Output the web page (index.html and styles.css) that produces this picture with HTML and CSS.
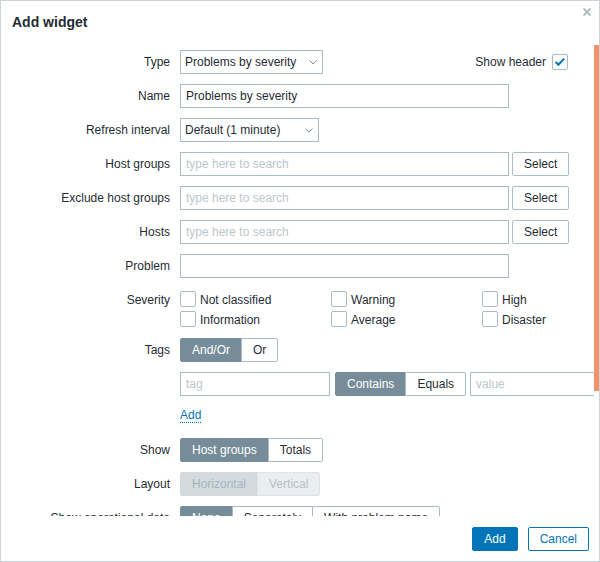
FILE: index.html
```html
<!DOCTYPE html>
<html>
<head>
<meta charset="utf-8">
<link rel="stylesheet" href="styles.css">
</head>
<body>
<div class="dialog">
  <div class="head">
    <h4 class="title">Add widget</h4>
    <span class="close"><svg width="8" height="8" viewBox="0 0 8 8"><path d="M0.5 0.5 L7.5 7.5 M7.5 0.5 L0.5 7.5" stroke="#a9b6bc" stroke-width="1.8" fill="none"/></svg></span>
  </div>
  <div class="body">
    <div class="content">
      <div class="form">
        <div class="lbl">Type</div>
        <div class="field split">
          <div class="select sel-type"><span>Problems by severity</span><svg class="chev" width="8" height="5" viewBox="0 0 8 5"><polyline points="0.5,0.5 4,4 7.5,0.5" fill="none" stroke="#7a8c95" stroke-width="1"/></svg></div>
          <div class="show-header"><span>Show header</span><span class="cb"><svg width="14" height="14" viewBox="0 0 14 14"><path d="M2.6 7 L5.4 9.8 L11.2 3.6" fill="none" stroke="#0275b8" stroke-width="2"/></svg></span></div>
        </div>

        <div class="lbl">Name</div>
        <div class="field"><div class="input w329">Problems by severity</div></div>

        <div class="lbl">Refresh interval</div>
        <div class="field"><div class="select sel-refresh"><span>Default (1 minute)</span><svg class="chev" width="8" height="5" viewBox="0 0 8 5"><polyline points="0.5,0.5 4,4 7.5,0.5" fill="none" stroke="#7a8c95" stroke-width="1"/></svg></div></div>

        <div class="lbl">Host groups</div>
        <div class="field picker"><div class="input w329 ph">type here to search</div><span class="btn">Select</span></div>

        <div class="lbl">Exclude host groups</div>
        <div class="field picker"><div class="input w329 ph">type here to search</div><span class="btn">Select</span></div>

        <div class="lbl">Hosts</div>
        <div class="field picker"><div class="input w329 ph">type here to search</div><span class="btn">Select</span></div>

        <div class="lbl">Problem</div>
        <div class="field"><div class="input w329"></div></div>

        <div class="lbl">Severity</div>
        <div class="field severity">
          <label class="chk"><span class="cb"></span>Not classified</label>
          <label class="chk"><span class="cb"></span>Information</label>
          <label class="chk"><span class="cb"></span>Warning</label>
          <label class="chk"><span class="cb"></span>Average</label>
          <label class="chk"><span class="cb"></span>High</label>
          <label class="chk"><span class="cb"></span>Disaster</label>
        </div>

        <div class="lbl">Tags</div>
        <div class="field tags">
          <div class="seg"><span class="seg-item on">And/Or</span><span class="seg-item">Or</span></div>
          <div class="tag-row">
            <div class="input w150 ph">tag</div>
            <div class="seg"><span class="seg-item on">Contains</span><span class="seg-item">Equals</span></div>
            <div class="input w150 ph">value</div>
          </div>
          <div class="add-row"><span class="link">Add</span></div>
        </div>

        <div class="lbl">Show</div>
        <div class="field"><div class="seg"><span class="seg-item on">Host groups</span><span class="seg-item">Totals</span></div></div>

        <div class="lbl">Layout</div>
        <div class="field"><div class="seg disabled"><span class="seg-item on">Horizontal</span><span class="seg-item">Vertical</span></div></div>

        <div class="lbl">Show operational data</div>
        <div class="field"><div class="seg"><span class="seg-item on">None</span><span class="seg-item">Separately</span><span class="seg-item">With problem name</span></div></div>

        <div class="lbl">Show suppressed problems</div>
        <div class="field"><span class="cb"></span></div>
      </div>
    </div>
    <div class="track"><div class="thumb"></div></div>
  </div>
  <div class="foot">
    <span class="btn btn-primary">Add</span>
    <span class="btn btn-outline">Cancel</span>
  </div>
</div>
</body>
</html>
```

FILE: styles.css
```css
* { box-sizing: border-box; }
html, body { margin: 0; padding: 0; background: #fff; }
body {
  font-family: "Liberation Sans", Arial, sans-serif;
  font-size: 12px;
  color: #1f2c33;
}
.dialog {
  width: 600px;
  height: 562px;
  border: 1px solid #ccd5d9;
  background: #fff;
  display: flex;
  flex-direction: column;
  position: relative;
}
.head {
  flex: none;
  height: 39px;
  padding: 13px 11px 0;
}
.title {
  margin: 0;
  font-size: 14px;
  line-height: 16px;
  font-weight: bold;
  color: #1f2c33;
}
.close {
  position: absolute;
  top: 7px;
  right: 8px;
  width: 8px;
  height: 8px;
  display: block;
}
.close svg { display: block; }

.body {
  flex: none;
  height: 476px;
  display: flex;
}
.content {
  flex: 1;
  overflow: hidden;
  padding: 10px 0 0 9px;
}
.track { flex: none; width: 5px; }
.thumb { margin-top: 5px; height: 346px; background: #f3926a; }

.form {
  display: grid;
  grid-template-columns: 160px 388px;
  column-gap: 10px;
  row-gap: 10px;
  align-items: start;
}
.lbl {
  text-align: right;
  line-height: 24px;
  white-space: nowrap;
}
.field { min-height: 24px; }
.split {
  display: flex;
  justify-content: space-between;
  align-items: center;
}
.select {
  height: 24px;
  border: 1px solid #acbbc2;
  background: #fff;
  padding: 0 5px 0 4px;
  line-height: 22px;
  display: flex;
  justify-content: space-between;
  align-items: center;
  white-space: nowrap;
}
.sel-type { width: 143px; }
.sel-refresh { width: 139px; }
.chev { display: block; margin-top: 1px; }
.show-header {
  display: flex;
  align-items: center;
  gap: 6px;
}
.cb {
  width: 16px;
  height: 16px;
  border: 1px solid #acbbc2;
  border-radius: 2px;
  background: #fff;
  display: inline-flex;
  align-items: center;
  justify-content: center;
  flex: none;
}
.cb svg { display: block; }
.input {
  height: 24px;
  border: 1px solid #acbbc2;
  background: #fff;
  padding: 0 5px;
  line-height: 22px;
  white-space: nowrap;
  overflow: hidden;
  flex: none;
}
.input.ph { color: #bcc6cb; }
.w329 { width: 329px; }
.w150 { width: 150px; }
.picker { display: flex; gap: 3px; }
.btn {
  display: inline-block;
  height: 24px;
  padding: 0 11px;
  border: 1px solid #acbbc2;
  border-radius: 2px;
  background: #fff;
  line-height: 22px;
  color: #1f2c33;
  white-space: nowrap;
  flex: none;
}
.btn-primary { background: #0275b8; border-color: #0275b8; color: #fff; }
.btn-outline { background: #fff; border-color: #0275b8; color: #0275b8; }

.severity {
  display: grid;
  grid-template-columns: repeat(3, 151px);
  grid-template-rows: repeat(2, 20px);
  grid-auto-flow: column;
}
.chk {
  display: flex;
  align-items: flex-start;
  gap: 4px;
  line-height: 24px;
  height: 20px;
  white-space: nowrap;
}
.chk .cb { margin-top: 3px; }

.seg { display: inline-flex; }
.seg-item {
  height: 24px;
  padding: 0 11px;
  border: 1px solid #acbbc2;
  line-height: 22px;
  background: #fff;
  color: #1f2c33;
  white-space: nowrap;
}
.seg-item + .seg-item { margin-left: -1px; }
.seg-item:first-child { border-radius: 2px 0 0 2px; }
.seg-item:last-child { border-radius: 0 2px 2px 0; }
.seg-item.on { background: #768d99; border-color: #768d99; color: #fff; }
.seg.disabled .seg-item { background: #ebeef0; border-color: #dfe4e7; color: #b5c0c6; }
.seg.disabled .seg-item.on { background: #d4dbdf; border-color: #d4dbdf; color: #a6b4bb; }

.tags { display: flex; flex-direction: column; align-items: flex-start; }
.tag-row {
  display: flex;
  margin-top: 10px;
  white-space: nowrap;
}
.tag-row .seg { margin-left: 5px; margin-right: 4px; flex: none; }
.add-row {
  margin-top: 10px;
  height: 18px;
  line-height: 18px;
  margin-bottom: 4px;
}
.link {
  color: #0275b8;
  border-bottom: 1px dotted #0275b8;
}

.foot {
  flex: 1;
  padding: 11px 10px 0;
  display: flex;
  justify-content: flex-end;
  align-items: flex-start;
  gap: 10px;
}
```
